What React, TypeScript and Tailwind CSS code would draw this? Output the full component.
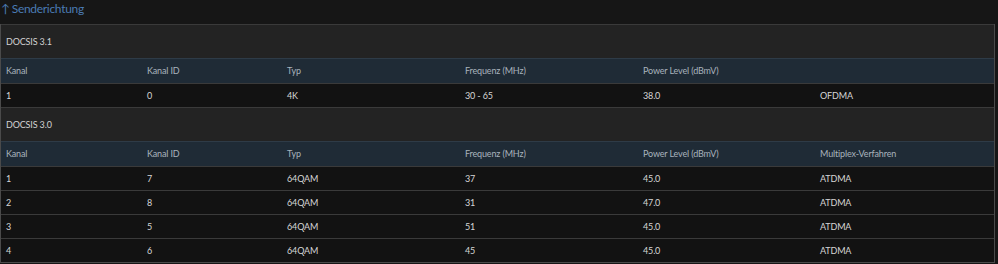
import React from "react";

const cols = ["w-[141px]", "w-[140px]", "w-[178px]", "w-[178px]", "w-[177px]", "w-[170px]"];

function Section({ title }: { title: string }) {
  return (
    <div className="h-[34px] flex items-center pl-[5px] bg-[#232323] border-t border-[#3a3a3a] text-[#d2d2d2]">
      {title}
    </div>
  );
}

function HeaderRow({ cells }: { cells: string[] }) {
  return (
    <div className="h-[25px] flex items-center bg-[#1f2b36] border-t border-[#2e3b47] text-[#a9b3bd]">
      {cells.map((c, i) => (
        <div key={i} className={`${cols[i]} shrink-0 pl-[5px]`}>
          {c}
        </div>
      ))}
    </div>
  );
}

function DataRow({ cells }: { cells: string[] }) {
  return (
    <div className="h-[24px] flex items-center bg-[#121212] border-t border-[#3a3a3a] text-[#d6d6d6]">
      {cells.map((c, i) => (
        <div key={i} className={`${cols[i]} shrink-0 pl-[5px]`}>
          {c}
        </div>
      ))}
    </div>
  );
}

export default function App() {
  const hdr = ["Kanal", "Kanal ID", "Typ", "Frequenz (MHz)", "Power Level (dBmV)"];
  return (
    <div
      className="w-[998px] h-[264px] bg-[#161616] overflow-hidden text-[9px] tracking-[-0.15px]"
      style={{ fontFamily: "Lato, 'Noto Sans', sans-serif" }}
    >
      <div className="h-[24px] flex items-start pt-[1px] pl-[1px] text-[12px] leading-[15px] tracking-[-0.3px] text-[#4a7bb4]">
        <span className="mr-[2px]">↑</span>
        <span>Senderichtung</span>
      </div>
      <div className="w-[995px] border-r border-l border-[#4a4a4a] border-b">
        <Section title="DOCSIS 3.1" />
        <HeaderRow cells={hdr} />
        <DataRow cells={["1", "0", "4K", "30 - 65", "38.0", "OFDMA"]} />
        <Section title="DOCSIS 3.0" />
        <HeaderRow cells={[...hdr, "Multiplex-Verfahren"]} />
        <DataRow cells={["1", "7", "64QAM", "37", "45.0", "ATDMA"]} />
        <DataRow cells={["2", "8", "64QAM", "31", "47.0", "ATDMA"]} />
        <DataRow cells={["3", "5", "64QAM", "51", "45.0", "ATDMA"]} />
        <DataRow cells={["4", "6", "64QAM", "45", "45.0", "ATDMA"]} />
      </div>
    </div>
  );
}
